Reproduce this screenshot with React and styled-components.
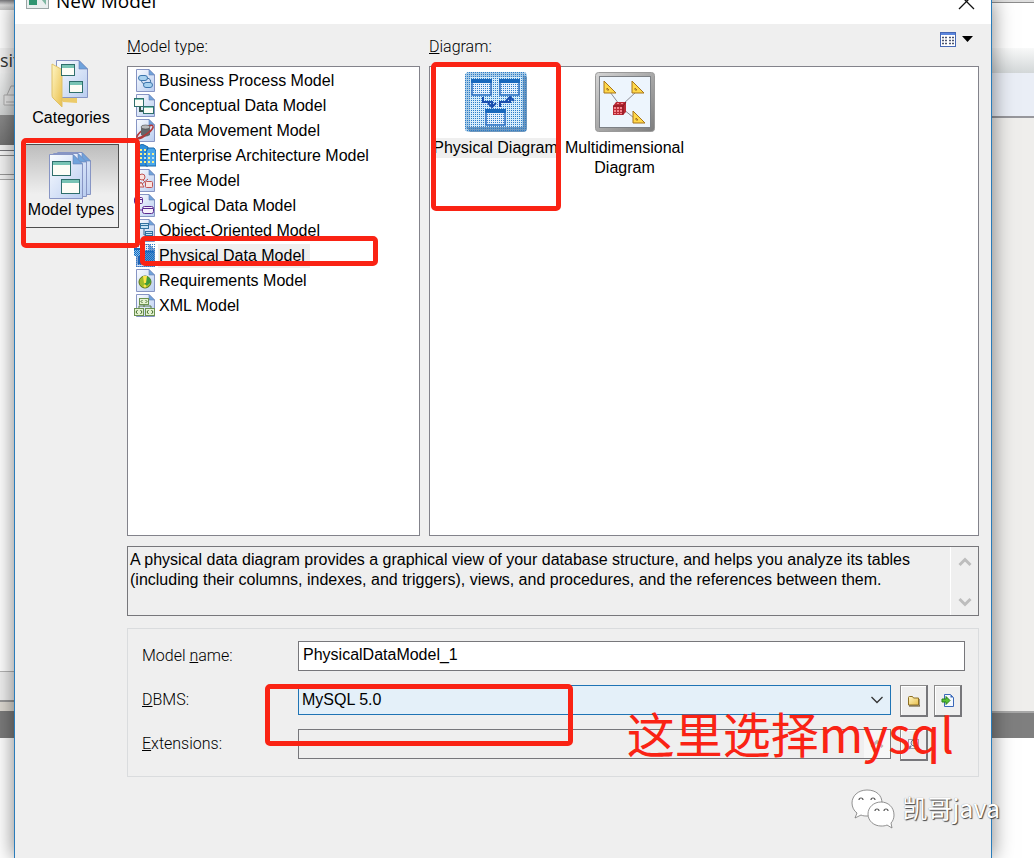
import React from 'react';
import styled, { createGlobalStyle } from 'styled-components';

const GlobalStyle = createGlobalStyle`
  * {
    box-sizing: border-box;
  }

  body {
    margin: 0;
    background: #fff;
    color: #000;
    font-family: "Liberation Sans", Arial, sans-serif;
    font-size: 16px;
    line-height: 20px;
  }

  button, input, select, textarea {
    font: inherit;
    color: inherit;
  }
`;

const Desktop = styled.div`
  position: relative;
  display: grid;
  grid-template-columns: 14px minmax(0, 1fr) 42px;
  min-height: 100vh;
  overflow: hidden;
`;

const Backdrop = styled.div`
  display: flex;
  flex-direction: column;
  overflow: hidden;
`;

const Band = styled.div`
  flex: ${props => props.$size ? `0 0 ${props.$size}px` : '1'};
  background: ${props => props.$fill};
  overflow: hidden;
  font-family: "Open Sans", sans-serif;
  font-size: 18px;
  line-height: 24px;
  color: #333;
`;

const Dialog = styled.main`
  position: relative;
  z-index: 1;
  display: flex;
  flex-direction: column;
  background: #efefef;
  border: solid #2a7cba;
  border-width: 0 1px;
  box-shadow: 0 0 20px rgba(0, 0, 0, .5);
`;

const TitleBar = styled.header`
  display: flex;
  align-items: flex-end;
  gap: 7px;
  height: 24px;
  padding: 0 16px 9px 11px;
  background: #fff;
`;

const Title = styled.h1`
  margin: 0 auto 0 0;
  font-family: "Open Sans", sans-serif;
  font-size: 19px;
  font-weight: 400;
  line-height: 28px;
`;

const PlainButton = styled.button`
  display: flex;
  align-items: center;
  padding: 0;
  border: 0;
  background: none;
  cursor: pointer;
`;

const Body = styled.div`
  flex: 1;
  display: grid;
  grid-template-columns: 112px minmax(0, 1fr);
  padding: 0 12px 81px 0;
`;

const Sidebar = styled.nav`
  display: flex;
  flex-direction: column;
  gap: 8px;
  padding: 28px 8px 0;
`;

const SideButton = styled.button`
  position: relative;
  display: flex;
  flex-direction: column;
  align-items: center;
  gap: 1px;
  padding: 6px 0 7px;
  border: 1px solid ${props => props.$active ? '#4d4d4d' : 'transparent'};
  background: ${props => props.$active ? 'linear-gradient(#bdbdbd, #efefef 60%)' : 'none'};
  white-space: nowrap;
  cursor: pointer;
`;

const Content = styled.div`
  display: flex;
  flex-direction: column;
  min-width: 0;
`;

const Panels = styled.div`
  flex: 1;
  display: grid;
  grid-template-columns: 293fr 550fr;
  gap: 9px;
`;

const Panel = styled.section`
  display: flex;
  flex-direction: column;
  min-width: 0;
`;

const PanelHead = styled.div`
  display: flex;
  justify-content: space-between;
  align-items: flex-start;
  height: 42px;
  padding-right: 6px;
`;

const PanelTitle = styled.h2`
  margin: 0;
  padding-top: 13px;
  font-family: Roboto, sans-serif;
  font-size: 16px;
  font-weight: 300;
`;

const ViewButton = styled(PlainButton)`
  gap: 6px;
  height: 30px;
`;

const TypeList = styled.ul`
  flex: 1;
  margin: 0;
  padding: 1px 0;
  list-style: none;
  background: #fff;
  border: 1px solid #83838b;
`;

const TypeItem = styled.li`
  position: relative;
`;

const TypeButton = styled(PlainButton)`
  gap: 2px;
  width: 100%;
  height: 25px;
  padding-left: 6px;
`;

const TypeName = styled.span`
  padding: 2px 5px 2px 1px;
  background: ${props => props.$selected ? '#efefef' : 'none'};
`;

const DiagramGrid = styled.div`
  flex: 1;
  display: flex;
  flex-wrap: wrap;
  align-content: flex-start;
  padding-left: 1px;
  background: #fff;
  border: 1px solid #83838b;
`;

const DiagramButton = styled.button`
  position: relative;
  display: flex;
  flex-direction: column;
  align-items: center;
  justify-content: flex-start;
  gap: 6px;
  width: 129px;
  padding: 5px 0 0;
  border: 0;
  background: none;
  cursor: pointer;
`;

const DiagramName = styled.span`
  background: ${props => props.$selected ? '#efefef' : 'none'};
`;

const Description = styled.div`
  display: flex;
  height: 70px;
  margin: 10px 0 12px;
  border: 1px solid #77777b;
`;

const DescriptionText = styled.p`
  flex: 1;
  margin: 0;
  padding: 3px 2px;
`;

const ScrollTrack = styled.div`
  display: flex;
  flex-direction: column;
  justify-content: space-between;
  align-items: center;
  width: 28px;
  padding: 10px 0 8px;
  border-left: 1px solid #fff;
`;

const Form = styled.form`
  position: relative;
  display: flex;
  flex-direction: column;
  gap: 12px;
  padding: 12px 13px 15px 14px;
  border: 1px solid #dadcde;
`;

const Field = styled.div`
  position: relative;
  display: grid;
  grid-template-columns: 156px minmax(0, 1fr) ${props => props.$tools ? '74px' : ''};
  align-items: start;
  min-height: 32px;
`;

const FieldLabel = styled.label`
  padding-top: 5px;
  font-family: Roboto, sans-serif;
  font-weight: 300;
`;

const TextInput = styled.input`
  width: 100%;
  height: 30px;
  padding: 0 4px 2px;
  border: 1px solid #77777b;
  border-radius: 0;
  background: ${props => props.readOnly ? '#efefef' : '#fff'};
  outline: none;
`;

const Control = styled.div`
  position: relative;
`;

const Select = styled.select`
  appearance: none;
  display: block;
  width: 100%;
  height: 30px;
  padding: 0 28px 0 3px;
  border: 1px solid #1f74b5;
  border-radius: 0;
  background: #e4f0f9;
  outline: none;
`;

const ControlMark = styled.span`
  position: absolute;
  top: 1px;
  right: 1px;
  bottom: 1px;
  display: flex;
  align-items: center;
  justify-content: center;
  width: 26px;
  background: ${props => props.$light ? '#f7f7f7' : 'none'};
  pointer-events: none;
`;

const Tools = styled.div`
  display: flex;
  gap: 6px;
  padding-left: 9px;
`;

const ToolButton = styled.button`
  display: flex;
  align-items: center;
  justify-content: center;
  width: 28px;
  height: 32px;
  padding: 0;
  background: #efefef;
  border: solid;
  border-width: 1px 2px 2px 1px;
  border-color: #8c8c8c #77777b #77777b #8c8c8c;
  box-shadow: inset 1px 1px #fff;
  cursor: pointer;
`;

// hand-drawn red frames around the highlighted controls
const Frame = styled.span`
  position: absolute;
  z-index: 2;
  border: 5px solid #fa2314;
  border-radius: 5px;
  pointer-events: none;
`;

const SideFrame = styled(Frame)`
  top: -7px;
  left: -3px;
  width: 119px;
  height: 110px;
`;

const TypeFrame = styled(Frame)`
  top: -7px;
  left: 12px;
  width: 238px;
  height: 30px;
`;

const DiagramFrame = styled(Frame)`
  top: -5px;
  left: 0;
  width: 130px;
  height: 149px;
`;

const FieldFrame = styled(Frame)`
  top: -1px;
  left: 123px;
  width: 308px;
  height: 62px;
`;

const Note = styled.strong`
  position: absolute;
  z-index: 2;
  right: 24px;
  bottom: 8px;
  color: #fa2314;
  font-family: "Noto Sans CJK SC", sans-serif;
  font-size: 48px;
  font-weight: 400;
  line-height: 72px;
  white-space: nowrap;
  pointer-events: none;
`;

const Watermark = styled.div`
  position: absolute;
  z-index: 3;
  right: 34px;
  bottom: 29px;
  display: flex;
  align-items: flex-start;
  gap: 7px;
  color: #fff;
  font-family: "Noto Sans CJK SC", sans-serif;
  font-size: 25px;
  line-height: 36px;
  text-shadow: 1px 1px 1px #444, 0 0 1px #888;
`;

const Page = ({ x = 2, y = 0, w = 19, h = 23, fold = 6 }) => (
  <g>
    <path
      d={`M${x + .5} ${y + .5}H${x + w - fold}L${x + w - .5} ${y + fold}V${y + h - .5}H${x + .5}Z`}
      fill="url(#page)"
      stroke="#8795c4"
    />
    <path d={`M${x + w - fold} ${y + .5}V${y + fold}H${x + w - .5}Z`} fill="#6fa3dc" stroke="#6580b5" strokeWidth=".6" />
  </g>
);

const Pane = ({ x, y, w, h, color = '#2f6f6c', head = '#79c4b4', bar = 3 }) => (
  <g>
    <rect x={x + .5} y={y + .5} width={w - 1} height={h - 1} fill="#fdfdf6" stroke={color} />
    <rect x={x + 1} y={y + 1} width={w - 2} height={bar} fill={head} />
  </g>
);

const typeIcons = {
  process: (
    <>
      <Page />
      <path d="M8 10q-2 5 5 5M13 9q5 1 3 5" fill="none" stroke="#3d6f9f" />
      <rect x="4.500" y="6.500" width="9" height="5" rx="2.500" fill="#a9d2ef" stroke="#3d76ad" />
      <rect x="9.500" y="13.500" width="9" height="5" rx="2.500" fill="#a9d2ef" stroke="#3d76ad" />
    </>
  ),
  conceptual: (
    <>
      <Page />
      <path d="M6 12v5h6" fill="none" stroke="#34584f" strokeWidth="2" />
      <Pane x={0} y={4} w={10} h={9} bar={1} />
      <Pane x={9} y={12} w={11} h={8} bar={1} />
    </>
  ),
  movement: (
    <>
      <Page />
      <ellipse cx="11" cy="13" rx="10" ry="3" fill="none" stroke="#b23a3a" strokeWidth="1.500" transform="rotate(-38 11 13)" />
      <path d="M7 8v8q4 3 9 0V8Z" fill="#62666b" />
      <ellipse cx="11.500" cy="8" rx="4.500" ry="2" fill="#b7b9bb" stroke="#444" strokeWidth=".6" />
      <path d="M4 19q8-2 13-8" fill="none" stroke="#b23a3a" strokeWidth="1.500" />
    </>
  ),
  enterprise: (
    <>
      <path d="M3 22V3L8 0l6 3v19Z" fill="#2f8fdc" stroke="#1767ab" />
      <path d="M12 22V8l2-4h6l2 3v15Z" fill="#4aa7ea" stroke="#1767ab" />
      <path d="M6 6h2M10 6h2M6 10h2M10 10h2M6 14h2M6 18h2M10 18h2M14 10h2M18 10h2M14 14h2M14 18h2M18 18h2" stroke="#f8ef8a" strokeWidth="2" />
      <path d="M10 14h2M18 14h2" stroke="#b7e2fb" strokeWidth="2" />
    </>
  ),
  free: (
    <>
      <Page />
      <path d="M7 9l7 7M8 15l6-5" stroke="#c05454" />
      <circle cx="8" cy="8" r="3" fill="#fbe3df" stroke="#c05454" />
      <rect x="11.500" y="12.500" width="7" height="6" rx="1" fill="#fbe3df" stroke="#c05454" />
      <path d="M4 18l3-5 3 5Z" fill="#fbe3df" stroke="#c05454" />
    </>
  ),
  logical: (
    <>
      <Page />
      <path d="M4 9v7h5" fill="none" stroke="#6a2f9b" />
      <rect x=".5" y="3.500" width="8" height="6" rx="1" fill="#f6f1fb" stroke="#5b2b91" />
      <rect x="8.500" y="12.500" width="11" height="7" rx="2" fill="#f6f1fb" stroke="#5b2b91" />
      <path d="M1 5.500h8M9 14.500h10" stroke="#5b2b91" />
    </>
  ),
  object: (
    <>
      <Page />
      <path d="M10 9v7h4" fill="none" stroke="#31658f" />
      <rect x="6.500" y="4.500" width="8" height="5" fill="#c5e3f6" stroke="#31719f" />
      <rect x="11.500" y="12.500" width="7" height="7" fill="#c5e3f6" stroke="#31719f" />
      <path d="M11 14.500h8M11 16.500h8M6 6.500h8" stroke="#31719f" />
    </>
  ),
  physical: (
    <>
      <Page />
      <rect x="2" width="19" height="23" fill="url(#lightDots)" />
      <path d="M5 10v9h6" fill="none" stroke="#1d62b4" strokeWidth="3" />
      <rect x="0" y="4" width="9" height="8" fill="#8fc0ee" />
      <rect x="9" y="7" width="11" height="12" fill="#5b92d0" />
      <path d="M0 4h9v8H0ZM9 7h11v12H9Z" fill="url(#dots)" />
      <path d="M0 5h9M9 7.500h11" stroke="#1868bd" strokeWidth="2" />
    </>
  ),
  requirements: (
    <>
      <Page />
      <circle cx="11" cy="13" r="6" fill="#9fbc2c" stroke="#5a7416" />
      <path d="M11 7a6 6 0 0 1 6 6l-6 5Z" fill="#3f9b3c" />
      <path d="M9 7h4l-1 7h-2Z" fill="#ffe54d" />
      <circle cx="11" cy="17" r="1.500" fill="#ffe54d" />
    </>
  ),
  xml: (
    <>
      <Page />
      <path d="M10 10v3M5 14v-2h12v2" fill="none" stroke="#57794b" />
      <g fill="#e5f2d1" stroke="#6b9150">
        <rect x="5.500" y="4.500" width="9" height="6" />
        <rect x=".5" y="14.500" width="9" height="7" />
        <rect x="11.500" y="14.500" width="9" height="7" />
      </g>
      <path d="M8.500 6L7 7.500 8.500 9M11.500 6L13 7.500 11.500 9M3.500 16L2 18l1.500 2M6.500 16L8 18l-1.500 2M14.500 16L13 18l1.500 2M17.500 16l1.500 2-1.500 2" fill="none" stroke="#3f6b27" />
    </>
  )
};

const modelTypes = [
  { icon: 'process', name: 'Business Process Model' },
  { icon: 'conceptual', name: 'Conceptual Data Model' },
  { icon: 'movement', name: 'Data Movement Model' },
  { icon: 'enterprise', name: 'Enterprise Architecture Model' },
  { icon: 'free', name: 'Free Model' },
  { icon: 'logical', name: 'Logical Data Model' },
  { icon: 'object', name: 'Object-Oriented Model' },
  { icon: 'physical', name: 'Physical Data Model' },
  { icon: 'requirements', name: 'Requirements Model' },
  { icon: 'xml', name: 'XML Model' }
];

const DefsHolder = styled.svg`
  position: absolute;
  width: 0;
  height: 0;
`;

const SharedDefs = () => (
  <DefsHolder aria-hidden="true">
    <defs>
      <linearGradient id="page" x1="0" y1="0" x2="1" y2="1">
        <stop offset="0" stopColor="#fafcff" />
        <stop offset="1" stopColor="#b9cdf0" />
      </linearGradient>
      <linearGradient id="metal" x1="0" y1="0" x2="1" y2="1">
        <stop offset="0" stopColor="#d4d4d4" />
        <stop offset="1" stopColor="#7d7d7d" />
      </linearGradient>
      <linearGradient id="folder" x1="0" y1="0" x2="1" y2="1">
        <stop offset="0" stopColor="#fff6c4" />
        <stop offset="1" stopColor="#e9bf4c" />
      </linearGradient>
      <pattern id="dots" width="2" height="2" patternUnits="userSpaceOnUse">
        <rect width="1" height="1" fill="#0f6dc0" />
        <rect x="1" y="1" width="1" height="1" fill="#0f6dc0" />
      </pattern>
      <pattern id="lightDots" width="2" height="2" patternUnits="userSpaceOnUse">
        <rect width="1" height="1" fill="#2a7cc8" />
      </pattern>
    </defs>
  </DefsHolder>
);

const CategoriesIcon = () => (
  <svg width="48" height="48" viewBox="0 0 48 48" aria-hidden="true">
    <path d="M12 37l18 2v5l-14-1Z" fill="#eccb6a" />
    <Page x={9} y={1} w={32} h={38} fold={9} />
    <path d="M5 5l9 5q1 1 1 3v35L6 39q-1-1-1-3Z" fill="url(#folder)" stroke="#dfc169" />
    <Pane x={14} y={5} w={14} h={12} />
    <Pane x={22} y={22} w={14} h={12} />
  </svg>
);

const ModelTypesIcon = () => (
  <svg width="48" height="48" viewBox="0 0 48 48" aria-hidden="true">
    <Page x={10} y={1} w={34} h={43} fold={9} />
    <Page x={6} y={2} w={34} h={44} fold={9} />
    <Page x={2} y={3} w={34} h={45} fold={10} />
    <Pane x={5} y={10} w={19} h={15} />
    <Pane x={14} y={28} w={19} h={15} />
  </svg>
);

const PhysicalIcon = () => (
  <svg width="62" height="60" viewBox="0 0 62 60" aria-hidden="true">
    <rect width="62" height="60" rx="4" fill="#a9cbe6" />
    <path d="M58 3l4 2v51q0 4-4 4H5l-4-5h57Z" fill="#6f97bd" />
    <rect x="5" y="5" width="52" height="50" fill="#d6ecfb" />
    <rect width="62" height="60" rx="4" fill="url(#lightDots)" />
    <g fill="none" stroke="#1a4fae" strokeWidth="2">
      <path d="M18 25v5h9v5M35 35v-5h10v-4" />
      <path d="M23 31l4 4 4-4M41 29l4-4 4 4" />
    </g>
    {[[7, 8], [35, 8], [21, 38]].map(([x, y]) => (
      <g key={`${x}-${y}`}>
        <rect x={x} y={y} width="19" height="15" fill="#e4effd" stroke="#2f6fc0" strokeWidth="1.500" />
        <rect x={x} y={y} width="19" height="15" fill="url(#lightDots)" />
        <rect x={x - 1} y={y - 1} width="21" height="4" fill="#1868bd" />
      </g>
    ))}
  </svg>
);

const MultidimensionalIcon = () => (
  <svg width="60" height="60" viewBox="0 0 60 60" aria-hidden="true">
    <rect x=".5" y=".5" width="59" height="59" rx="3" fill="url(#metal)" stroke="#9a9a9a" />
    <rect x="4.500" y="4.500" width="51" height="51" fill="#edf5fd" stroke="#7c8085" />
    <path d="M15 20l9 12M41 20L27 33M28 37l11 9" stroke="#8b8b94" />
    {[[9, 9], [37, 9], [38, 39]].map(([x, y]) => (
      <path key={`${x}-${y}`} d={`M${x} ${y}l12 12h-12ZM${x + 3} ${y + 7}v2h2Z`} fill="#ffd84a" fillRule="evenodd" stroke="#a7741a" />
    ))}
    <path d="M18 34l3-4h10v10l-3 3H18Z" fill="#b92a36" />
    <path d="M19 35h2v2h-2ZM22 35h2v2h-2ZM25 35h2v2h-2ZM19 38h2v2h-2ZM22 38h2v2h-2ZM25 38h2v2h-2ZM19 41h2v1h-2ZM22 41h2v1h-2ZM25 41h2v1h-2ZM22 31h2v1h-2ZM26 31h2v1h-2Z" fill="#f3858d" />
    <path d="M18 34h10v9M28 34l3-4" fill="none" stroke="#74101b" strokeWidth=".8" />
  </svg>
);

const Chevron = ({ up, color = '#bdbdbd', thick = 3 }) => (
  <svg width="14" height="10" viewBox="0 0 14 10" aria-hidden="true">
    <path d={up ? 'M1.500 8L7 2.500 12.500 8' : 'M1.500 2L7 7.500 12.500 2'} fill="none" stroke={color} strokeWidth={thick} />
  </svg>
);

const FolderIcon = () => (
  <svg width="12" height="12" viewBox="0 0 12 12" aria-hidden="true">
    <path d="M.5 2.500q0-1 1-1h3l1 1.500h5v7H.5Z" fill="url(#folder)" stroke="#8d6e22" />
    <path d="M1 11h11V4" fill="none" stroke="#54431b" />
  </svg>
);

const ImportIcon = () => (
  <svg width="13" height="13" viewBox="0 0 13 13" aria-hidden="true">
    <path d="M3.500.5h6l3 3v9h-9Z" fill="#f3f8ff" stroke="#3a68b8" />
    <path d="M9.500.5v3h3Z" fill="#3a68b8" />
    <path d="M1 5h4V2.500L9 6.500l-4 4V8H1Z" fill="#58c234" stroke="#27801a" />
  </svg>
);

const ExtensionIcon = () => (
  <svg width="13" height="13" viewBox="0 0 13 13" aria-hidden="true">
    <rect x="1.500" y="1.500" width="10" height="9" fill="#f3f8ff" stroke="#9a9aa6" />
    <circle cx="7" cy="5" r="3" fill="#dfe5f2" stroke="#6c7798" />
    <path d="M1 11l3-3M8 10h4" stroke="#6c7798" strokeWidth="2" />
  </svg>
);

const App = () => {
  const [selectedType, setSelectedType] = React.useState('physical');
  const [diagram, setDiagram] = React.useState('physical');
  const [modelName, setModelName] = React.useState('PhysicalDataModel_1');

  return (
    <Desktop>
      <GlobalStyle />
      <SharedDefs />
      <Backdrop>
        <Band $size={10} $fill="linear-gradient(#77777b, #dcdcdc 50%, #c6c6c6)" />
        <Band $size={38} $fill="#fff" />
        <Band $size={25} $fill="#f4f4f4">sit</Band>
        <Band $size={42} $fill="linear-gradient(#f2f3f3, #d2d4d4)">
          <svg width="14" height="40" viewBox="0 0 14 40" fill="#e9e9e9" stroke="#adadad" aria-hidden="true">
            <path d="M7 22l4-9h6v9M4 22h14v10H4Z" />
            <path d="M6 29h9" />
          </svg>
        </Band>
        <Band $size={30} $fill="linear-gradient(#8b8b8b, #737373)" />
        <Band $size={5} $fill="#f4f4f4" />
        <Band $size={1} $fill="#77777b" />
        <Band $size={4} $fill="#f7f7f7" />
        <Band $size={1} $fill="#8c8c8c" />
        <Band $size={18} $fill="#f4f4f4" />
        <Band $size={1} $fill="#999" />
        <Band $size={4} $fill="#f4f4f4" />
        <Band $size={1} $fill="#aaa" />
        <Band $size={491} $fill="#fff" />
        <Band $size={1} $fill="#b5b5b5" />
        <Band $size={28} $fill="#f0f0f0" />
        <Band $size={2} $fill="#999" />
        <Band $size={9} $fill="#dedad2" />
        <Band $size={27} $fill="#7b7b7b" />
        <Band $fill="#fff" />
      </Backdrop>

      <Dialog>
        <TitleBar>
          <svg width="23" height="24" viewBox="0 0 23 24" aria-hidden="true">
            <rect x=".5" y="-6" width="22" height="23.500" fill="#e9eeee" stroke="#9aa5a5" />
            <rect x="3" y="-3" width="8" height="17" fill="#2f9470" />
            <path d="M11 3h9v11Z" fill="#7fb7a2" />
          </svg>
          <Title>New Model</Title>
          <PlainButton type="button" aria-label="Close">
            <svg width="17" height="24" viewBox="0 0 17 24" aria-hidden="true">
              <path d="M1 3l15 15M16 3L1 18" stroke="#111" strokeWidth="1.300" />
            </svg>
          </PlainButton>
        </TitleBar>

        <Body>
          <Sidebar>
            <SideButton type="button">
              <CategoriesIcon />
              Categories
            </SideButton>
            <SideButton type="button" $active>
              <ModelTypesIcon />
              Model types
              <SideFrame />
            </SideButton>
          </Sidebar>

          <Content>
            <Panels>
              <Panel>
                <PanelHead>
                  <PanelTitle><u>M</u>odel type:</PanelTitle>
                </PanelHead>
                <TypeList>
                  {modelTypes.map(({ icon, name }) => (
                    <TypeItem key={icon}>
                      <TypeButton type="button" onClick={() => setSelectedType(icon)}>
                        <svg width="22" height="24" viewBox="0 0 22 24" aria-hidden="true">
                          {typeIcons[icon]}
                        </svg>
                        <TypeName $selected={selectedType === icon}>{name}</TypeName>
                      </TypeButton>
                      {icon === 'physical' && <TypeFrame />}
                    </TypeItem>
                  ))}
                </TypeList>
              </Panel>

              <Panel>
                <PanelHead>
                  <PanelTitle><u>D</u>iagram:</PanelTitle>
                  <ViewButton type="button" aria-label="Change view">
                    <svg width="16" height="15" viewBox="0 0 16 15" aria-hidden="true">
                      <rect x=".5" y=".5" width="15" height="14" fill="#fff" stroke="#4668b4" />
                      <rect x="1" y="1" width="14" height="2" fill="#5c86dd" />
                      <path d="M2 5.500h2M5 5.500h2M9 5.500h2M12 5.500h2M2 8.500h2M5 8.500h2M9 8.500h2M12 8.500h2M2 11.500h2M5 11.500h2M9 11.500h2M12 11.500h2" stroke="#4b5570" strokeWidth="1.500" />
                    </svg>
                    <svg width="11" height="6" viewBox="0 0 11 6" aria-hidden="true">
                      <path d="M0 0h11L5.500 6Z" />
                    </svg>
                  </ViewButton>
                </PanelHead>
                <DiagramGrid>
                  <DiagramButton type="button" onClick={() => setDiagram('physical')}>
                    <PhysicalIcon />
                    <DiagramName $selected={diagram === 'physical'}>Physical Diagram</DiagramName>
                    <DiagramFrame />
                  </DiagramButton>
                  <DiagramButton type="button" onClick={() => setDiagram('multidimensional')}>
                    <MultidimensionalIcon />
                    <DiagramName $selected={diagram === 'multidimensional'}>Multidimensional Diagram</DiagramName>
                  </DiagramButton>
                </DiagramGrid>
              </Panel>
            </Panels>

            <Description>
              <DescriptionText>
                A physical data diagram provides a graphical view of your database structure, and helps you analyze its tables (including their columns, indexes, and triggers), views, and procedures, and the references between them.
              </DescriptionText>
              <ScrollTrack>
                <Chevron up />
                <Chevron />
              </ScrollTrack>
            </Description>

            <Form onSubmit={e => e.preventDefault()}>
              <Field>
                <FieldLabel htmlFor="modelName">Model <u>n</u>ame:</FieldLabel>
                <TextInput
                  id="modelName"
                  type="text"
                  value={modelName}
                  onChange={e => setModelName(e.target.value)}
                />
              </Field>
              <Field $tools>
                <FieldLabel htmlFor="dbms"><u>D</u>BMS:</FieldLabel>
                <Control>
                  <Select id="dbms" defaultValue="MySQL 5.0">
                    <option>MySQL 5.0</option>
                  </Select>
                  <ControlMark>
                    <Chevron color="#333" thick={1.3} />
                  </ControlMark>
                </Control>
                <Tools>
                  <ToolButton type="button" aria-label="Browse DBMS"><FolderIcon /></ToolButton>
                  <ToolButton type="button" aria-label="Import DBMS"><ImportIcon /></ToolButton>
                </Tools>
                <FieldFrame />
              </Field>
              <Field $tools>
                <FieldLabel htmlFor="extensions"><u>E</u>xtensions:</FieldLabel>
                <Control>
                  <TextInput id="extensions" type="text" readOnly />
                  <ControlMark $light>
                    <Chevron up />
                  </ControlMark>
                </Control>
                <Tools>
                  <ToolButton type="button" aria-label="Select extensions"><ExtensionIcon /></ToolButton>
                </Tools>
              </Field>
              <Note>这里选择mysql</Note>
            </Form>
          </Content>
        </Body>
      </Dialog>

      <Backdrop>
        <Band $size={2} $fill="#dedede" />
        <Band $size={1} $fill="#8c8c8c" />
        <Band $size={45} $fill="#fff" />
        <Band $size={25} $fill="linear-gradient(#f8f9f9, #d3d7d8)" />
        <Band $size={43} $fill="#eaeef6" />
        <Band $size={2} $fill="#97979c" />
        <Band $size={593} $fill="#efeeec" />
        <Band $size={2} $fill="#a8a8a8" />
        <Band $size={25} $fill="#7f7f7f" />
        <Band $fill="#fff" />
      </Backdrop>

      <Watermark>
        <svg width="44" height="40" viewBox="0 0 44 40" fill="#fff" stroke="#777" strokeWidth=".8" aria-hidden="true">
          <path d="M16 1C7 1 1 7 1 14c0 4 2 8 5 10l-2 5 6-3c2 1 4 1 7 1 8 0 14-5 14-13S25 1 16 1Z" />
          <path d="M30 13c-7 0-13 5-13 12s6 12 13 12c2 0 4 0 6-1l5 3-1-5c2-2 3-5 3-8 0-8-6-13-13-13Z" />
          <g fill="none" stroke="#555" strokeWidth="1.200">
            <path d="M8 11a2 2 0 0 1 4 0M20 11a2 2 0 0 1 4 0M24 22a2 2 0 0 1 4 0M33 22a2 2 0 0 1 4 0" />
          </g>
        </svg>
        <span>凯哥java</span>
      </Watermark>
    </Desktop>
  );
};

export default App;
